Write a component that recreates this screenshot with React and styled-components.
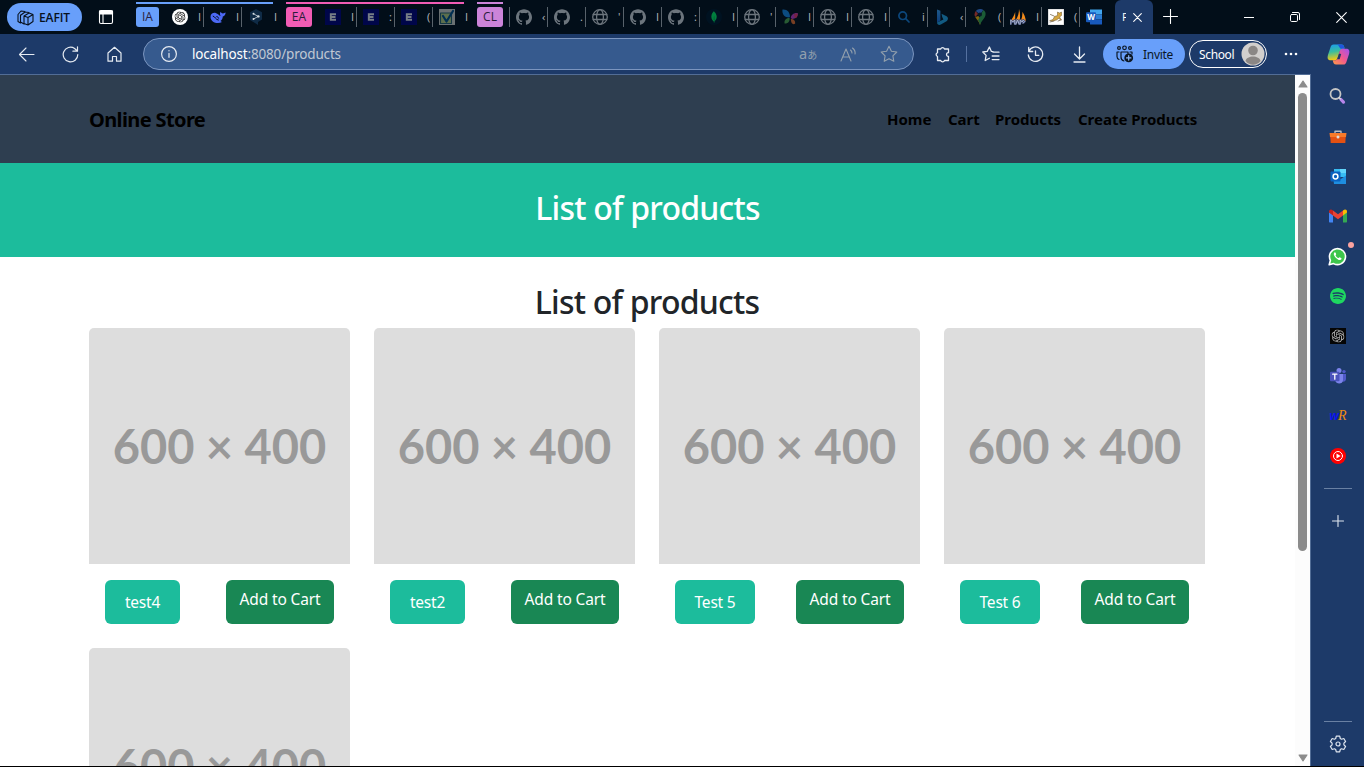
import React from "react";
import styled, { createGlobalStyle } from "styled-components";
import { SiGithub, SiOpenai, SiSpotify, SiMongodb } from "react-icons/si";

const ui = `"Noto Sans", "Open Sans", sans-serif`;

const GlobalStyle = createGlobalStyle`
  * { box-sizing: border-box; }
  html, body { margin: 0; padding: 0; }
  body { font-family: ${ui}; background: #1d3a69; overflow: hidden; }
  svg { display: block; flex: none; }
`;

const Window = styled.div`
  width: 1364px;
  height: 767px;
  display: flex;
  flex-direction: column;
  background: #1d3a69;
  border-bottom: 1px solid #000;
  overflow: hidden;
`;

/* ---------- tab strip ---------- */
const TabStrip = styled.div`
  height: 34px;
  flex: none;
  display: flex;
  background: #020e19;
  color: #fff;
`;
const Profile = styled.div`
  width: 75px;
  height: 28px;
  margin: 3px 0 0 7px;
  border-radius: 14px;
  background: #689ffa;
  color: #07111d;
  display: flex;
  align-items: center;
  padding-left: 10px;
  gap: 5px;
  font-family: "Open Sans", sans-serif;
  font-size: 12px;
  letter-spacing: -0.1px;
  font-weight: 600;
`;
const Workspace = styled.div`
  width: 54px;
  padding: 9px 0 0 16px;
`;
const Group = styled.div`
  width: ${(p) => p.$w}px;
  margin-right: ${(p) => p.$after}px;
  margin-top: 2px;
  height: 32px;
  border-top: 2px solid ${(p) => p.$c};
  display: flex;
  padding-top: 3px;
`;
const GroupChip = styled.div`
  width: ${(p) => p.$w}px;
  height: 20px;
  margin-right: 6px;
  flex: none;
  border-radius: 3px;
  background: ${(p) => p.$c};
  color: #2b1d3b;
  font-family: "Open Sans", sans-serif;
  font-size: 12px;
  line-height: 20px;
  text-align: center;
`;
const Tab = styled.div`
  width: 38px;
  flex: none;
  height: 20px;
  margin-top: ${(p) => p.$top || 0}px;
  border-left: 1px solid ${(p) => (p.$first ? "transparent" : "#58626b")};
  display: flex;
  align-items: center;
  padding-left: 6px;
`;
const Favicon = styled.div`
  width: 16px;
  height: 16px;
  flex: none;
  opacity: ${(p) => (p.$dim ? 0.5 : 1)};
`;
const Peek = styled.span`
  margin-left: 10px;
  white-space: nowrap;
  font-family: "Open Sans", sans-serif;
  font-size: 11px;
  line-height: 18px;
  color: #b4b8bc;
`;
const ActiveTab = styled.div`
  width: 38px;
  height: 34px;
  flex: none;
  margin-left: -2px;
  background: #1d3a69;
  border-radius: 6px 6px 0 0;
  display: flex;
  align-items: center;
  padding: 0 0 0 7px;
`;
const ActivePeek = styled(Peek)`
  width: 4px;
  overflow: hidden;
  margin: 0 7px 0 0;
  color: #fff;
`;
const WindowButtons = styled.div`
  display: flex;
  align-items: center;
  margin-left: auto;
  padding-right: 17px;
  gap: 36px;
`;
const NewTab = styled.div`
  padding: 9px 0 0 10px;
`;

/* ---------- toolbar ---------- */
const Toolbar = styled.div`
  height: 40px;
  flex: none;
  display: flex;
  align-items: center;
  color: #e6ebf2;
  padding-left: 18px;
`;
const Slot = styled.div`
  width: ${(p) => p.$w}px;
  flex: none;
  display: flex;
  align-items: center;
`;
const Address = styled.div`
  width: 771px;
  height: 32px;
  flex: none;
  border: 1px solid #7b95bf;
  border-radius: 16px;
  background: #365a8e;
  display: flex;
  align-items: center;
  padding: 0 15px 0 17px;
`;
const Url = styled.span`
  margin-left: 15px;
  font-size: 13.5px;
  line-height: 20px;
  white-space: nowrap;
  color: #c0c8d3;
  letter-spacing: -0.17px;
  b { font-weight: 400; color: #fff; }
`;
const AddressTools = styled.div`
  margin-left: auto;
  display: flex;
  align-items: center;
  gap: 23px;
  color: #93a0ad;
`;
const Translate = styled.span`
  font-size: 14.5px;
  line-height: 18px;
  width: 18px;
  white-space: nowrap;
  small { font-family: "Noto Sans CJK JP", sans-serif; font-size: 10px; }
`;
const ToolbarIcon = styled.div`
  width: ${(p) => p.$w}px;
  flex: none;
  display: flex;
  justify-content: center;
  padding-left: ${(p) => p.$shift || 0}px;
`;
const Divider = styled.div`
  width: 1px;
  height: 16px;
  background: #5571a0;
  flex: none;
`;
const Invite = styled.div`
  width: 82px;
  height: 30px;
  flex: none;
  margin-left: 2px;
  border-radius: 15px;
  background: #689ffa;
  color: #0b1726;
  display: flex;
  align-items: center;
  padding-left: 13px;
  gap: 9px;
  font-size: 12px;
  letter-spacing: -0.3px;
`;
const School = styled.div`
  width: 78px;
  height: 28px;
  flex: none;
  margin-left: 4px;
  border: 1px solid #fff;
  border-radius: 14px;
  color: #fff;
  display: flex;
  align-items: center;
  justify-content: space-between;
  padding: 0 1px 0 9px;
  font-size: 12px;
  letter-spacing: -0.35px;
`;

/* ---------- page ---------- */
const Body = styled.div`
  flex: 1;
  min-height: 0;
  display: flex;
`;
const Viewport = styled.div`
  width: 1311px;
  display: flex;
  border-top: 1px solid #526d96;
  border-right: 1px solid #526d96;
`;
const Page = styled.div`
  width: 1295px;
  flex: none;
  background: #fff;
  overflow: hidden;
`;
const SiteHeader = styled.header`
  height: 88px;
  background: #2e3e50;
  display: flex;
  align-items: center;
  justify-content: space-between;
  padding: 0 98px 0 89px;
  color: #000;
`;
const Brand = styled.div`
  padding-top: 2px;
  font-size: 20px;
  line-height: 30px;
  font-weight: 700;
  letter-spacing: -0.62px;
  white-space: nowrap;
`;
const Nav = styled.nav`
  display: flex;
  gap: 16px;
`;
const NavLink = styled.a`
  width: ${(p) => p.$w}px;
  font-size: 15px;
  line-height: 24px;
  font-weight: 700;
  letter-spacing: -0.02px;
  white-space: nowrap;
`;
const Title = styled.h2`
  margin: 0;
  font-size: 32px;
  line-height: 38px;
  font-weight: 500;
  text-align: center;
  letter-spacing: -0.78px;
  color: ${(p) => p.$c};
`;
const Masthead = styled.div`
  height: 94px;
  background: #1cbc9c;
  padding-top: 26px;
`;
const Content = styled.main`
  padding: 26px 90px 0 89px;
`;
const Grid = styled.div`
  display: grid;
  grid-template-columns: repeat(4, 261px);
  gap: 24px;
  margin-top: 7px;
`;
const Card = styled.article`
  height: 296px;
`;
const Placeholder = styled.div`
  height: 236px;
  background: #ddd;
  border-radius: 5px 5px 0 0;
  color: #999;
  font-family: Lato, sans-serif;
  font-weight: 700;
  font-size: 47px;
  line-height: 236px;
  text-align: center;
  white-space: nowrap;
`;
const Actions = styled.div`
  display: flex;
  justify-content: space-between;
  padding: 16px 16px 0;
`;
const Button = styled.button`
  width: ${(p) => p.$w}px;
  height: 44px;
  border: 0;
  border-radius: 6px;
  padding: ${(p) => p.$pad};
  background: ${(p) => p.$c};
  color: #fff;
  font: 400 15.5px/24px ${ui};
  letter-spacing: ${(p) => p.$ls}px;
  white-space: nowrap;
`;
const Scrollbar = styled.div`
  width: 15px;
  background: #fcfcfc;
  display: flex;
  flex-direction: column;
  align-items: center;
  padding: 5px 0 4px;
`;
const Thumb = styled.div`
  width: 9px;
  height: 458px;
  margin: 5px 0 auto;
  border-radius: 5px;
  background: #8b8b8b;
`;

/* ---------- sidebar ---------- */
const Sidebar = styled.aside`
  width: 53px;
  display: flex;
  flex-direction: column;
  align-items: center;
  padding-top: 2px;
  color: #dfe6f0;
`;
const SideItem = styled.div`
  height: 40px;
  width: 53px;
  display: flex;
  align-items: center;
  justify-content: center;
  position: relative;
  flex: none;
`;
const AddApp = styled(SideItem)`
  margin-top: 12px;
`;
const Settings = styled(SideItem)`
  height: 44px;
`;
const Dot = styled.i`
  position: absolute;
  width: 6px;
  height: 6px;
  border-radius: 50%;
  background: #fba3a0;
  right: 10px;
  top: 6px;
`;
const Rule = styled.div`
  width: 28px;
  height: 1px;
  flex: none;
  background: #6980a3;
  margin-top: ${(p) => p.$top};
`;
const WordRef = styled.span`
  color: #0a12ef;
  font: italic 700 12px/16px "Liberation Sans", sans-serif;
  letter-spacing: -1px;
  b { color: #f08a13; font: italic 400 14px/16px "Liberation Serif", serif; }
`;

const Svg = ({ s = 16, w = 1.1, box = 16, children, h }) => (
  <svg width={s} height={h || s} viewBox={`0 0 ${box} ${h ? (box * h) / s : box}`} fill="none" stroke="currentColor" strokeWidth={w} strokeLinecap="round" strokeLinejoin="round">
    {children}
  </svg>
);

const Globe = () => (
  <Svg w={1.3}>
    <g stroke="#d6dbe0">
      <circle cx="8" cy="8" r="7.3" />
      <ellipse cx="8" cy="8" rx="3.4" ry="7.3" />
      <path d="M1.3 5.5h13.4M1.3 10.5h13.4" />
    </g>
  </Svg>
);
const GitHub = () => <SiGithub size={16} color="#d6dbe0" />;
const Eafit = () => (
  <Svg>
    <rect x="0" y="0" width="16" height="16" fill="#00007c" stroke="none" />
    <path d="M11 5.200H5.800v5.600H11M5.800 8h4.700" stroke="#e9ecf2" strokeWidth="1.900" strokeLinecap="butt" strokeLinejoin="miter" />
  </Svg>
);
const ChatGpt = () => (
  <Svg>
    <circle cx="8" cy="8" r="8" fill="#fff" stroke="none" />
    <g transform="translate(2.5 2.5)"><SiOpenai size={11} color="#111" stroke="none" /></g>
  </Svg>
);
const Whale = () => (
  <Svg>
    <path d="M0.5 8C0.5 4.8 3 3.4 5.7 3.9 8 4.5 9 6.4 10.6 7c-.9-1.6-.8-3 .1-4.2.5 1.3 1.3 1.6 2.2 1.6 1 0 1.8-.6 2.7-.8-.1 2-.9 3.5-2.8 3.9-.1 2-1 3.5-2.4 4.6l1.6 1c-4.6 2.5-11.5 0-11.5-5.1z" fill="#4c69f5" stroke="none" />
    <path d="M3.2 7.1c1.8.2 2.2 3.5 5.1 4M6.8 7.6c1 .1 1.7.8 1.8 1.6" stroke="#020e19" strokeWidth="1" />
  </Svg>
);
const DarkHex = () => (
  <Svg>
    <path d="M8 0l6 3.3v7.2L10 13v3l-3-2-5-3V3.3z" fill="#0f2b46" stroke="none" />
    <path d="M5.500 4.800l4.700 2.600-4.700 2.700" stroke="#b9c4ce" strokeWidth=".9" />
    <g fill="#d5dde4" stroke="none"><circle cx="5.500" cy="4.800" r="1" /><circle cx="10.400" cy="7.400" r="1.200" /><circle cx="5.500" cy="10.100" r="1" /></g>
  </Svg>
);
const Check = () => (
  <Svg>
    <rect width="16" height="16" fill="#d4d4cc" stroke="none" />
    <rect x="1.500" y="4" width="11" height="10.500" fill="#b5cf82" stroke="#276171" />
    <path d="M4 7l3.500 5.500L14 2" stroke="#00508c" strokeWidth="2.200" />
  </Svg>
);
const Mongo = () => (
  <Svg>
    <circle cx="8" cy="8" r="8" fill="#00172a" stroke="none" />
    <g transform="translate(2 2)"><SiMongodb size={12} color="#00ed64" stroke="none" /></g>
  </Svg>
);
const Butterfly = () => (
  <Svg>
    <g stroke="none">
      <path d="M.5.500C5 0 8 2.800 8 8.300 4 9 .3 6.500.4 1.800z" fill="#1689e6" />
      <path d="M8.800 9C8.800 6 12 3.600 15.800 4.200c.6 3-2 5.700-5.600 5.700z" fill="#c63acb" />
      <path d="M7.600 9C8 12.500 5.800 14.800 2.600 14.500 1.800 11.400 4 8.800 7.600 9z" fill="#4fa84e" />
      <path d="M8.800 10c3-.2 4.500 1.500 4.400 4.500-2 1.500-4.200.5-4.400-4.500z" fill="#ed702e" />
      <path d="M12 5l3.800-.6-.8 3.900-2.100 1z" fill="#ea3869" />
    </g>
  </Svg>
);
const BlueSearch = () => (
  <Svg w={1.7}><g stroke="#1680df"><circle cx="6.700" cy="6.700" r="3.800" /><path d="M9.700 9.700l3.300 3.300" /></g></Svg>
);
const Bing = () => (
  <Svg>
    <defs><linearGradient id="bing" x1="0" y1="0" x2="0" y2="1"><stop stopColor="#3ba4fa" /><stop offset="1" stopColor="#186ee0" /></linearGradient></defs>
    <path d="M3 .5l3.4 1.2v9.7L3 13.8z" fill="url(#bing)" stroke="none" />
    <path d="M7.500 4.800l4.600 2.100c3 1.500 1.800 4.300.4 5.300l-5.600 3.300c-1.800 1-3.900-.1-3.900-2l6.400-3.100-1.200-2.300z" fill="#22a5e8" stroke="none" />
  </Svg>
);
const MapsPin = () => (
  <Svg>
    <g stroke="none">
      <path d="M8 0a5.400 5.400 0 0 0-4.200 2L8 5.600 11.300.9A5.400 5.400 0 0 0 8 0z" fill="#4285f4" />
      <path d="M3.800 2a5.600 5.600 0 0 0-.6 6L6 5z" fill="#ea4335" />
      <path d="M3.200 8C4.500 10.500 7 12 8 16l1.500-5.200L6.300 7z" fill="#fbbc04" />
      <path d="M11.300.9C14 2.200 14.200 6 12.600 8.400 11 11 9 12.500 8 16c-.3-2-1-3.500-2-4.800z" fill="#34a853" />
      <circle cx="8" cy="5.500" r="2" fill="#0b1e31" />
    </g>
  </Svg>
);
const Sails = () => (
  <Svg>
    <path d="M5.200 3v9H.6C2.400 9.400 4 6.800 5.200 3zM9 0c1.300 3.800 1.200 7.700.8 11.500H5.500C7.800 8 9 4.500 9 0zM12.400 2.700c2 2.800 3 5.800 3.500 9h-5c1.200-3 1.700-6 1.500-9z" fill="#f38b1b" stroke="none" />
    <path d="M.8 15v-4l2 2 2-2v4m1 0l1.700-4L9.200 15m1 0v-4l2 2 1-2 1.500 1.500-1.500 1.500" stroke="#46527e" strokeWidth="2" />
    <path d="M.8 15v-4l2 2 2-2v4m1 0l1.700-4L9.200 15m1 0v-4l2 2 1-2 1.500 1.500-1.500 1.500" stroke="#b2bdd4" strokeWidth=".9" />
  </Svg>
);
const Tomcat = () => (
  <Svg>
    <rect width="16" height="16" fill="#fff" stroke="#c9c9c9" />
    <path d="M2 11.500l3-1 1.500-3 3-1L9.500 3l2 1 2-1v3.500l-2 1.500 2 3-3-1.500-2 1.500-4 1z" fill="#d3a642" stroke="#6d5328" strokeWidth=".5" />
    <path d="M2 13l4-1m4 0l3-1M2.500 5.500l3.500 1.500" stroke="#665438" strokeWidth=".7" />
  </Svg>
);
const OfficeTile = ({ letter, c, light, mid }) => (
  <Svg>
    <g stroke="none">
      <rect x="4" y="0.5" width="12" height="5" fill={light} />
      <rect x="4" y="5.5" width="12" height="5" fill={mid} />
      <rect x="4" y="10.5" width="12" height="5" rx=".6" fill={c} />
      <rect x="0" y="3.2" width="10" height="10" rx="1" fill={c} />
      <text x="5" y="11" fill="#fff" fontSize="8" fontWeight="700" textAnchor="middle" fontFamily="Open Sans">{letter}</text>
    </g>
  </Svg>
);
const Star = ({ list }) => (
  <Svg s={18} box={18} w={list ? 1.3 : 1.1}>
    <path d={list ? "M11 6.6L9.4 6.4 7.4 2 5.2 6.4.8 7l3.300 3.400-.9 5.100 4.200-2.300M11 7.200h6M10.200 11h6.800M10.200 14.600h6.800" : "M9 1.2l2.4 5 5.4.8-3.9 3.800.9 5.500L9 13.700l-4.800 2.600.9-5.500L1.200 7l5.400-.8z"} />
  </Svg>
);
const Puzzle = () => (
  <Svg s={17} box={17} w={1.3}>
    <path d="M3.500 3h3.200a2 2 0 0 1 3.800 0h4v3.700c-2.600-.5-2.600 4.100 0 3.600V14.500h-4a2 2 0 0 1-3.800 0H3.500v-4a2 2 0 0 1 0-3.800z" />
  </Svg>
);
const History = () => (
  <Svg s={17} box={17} w={1.3}>
    <path d="M1.700 1.500v4h4M1.900 5.200A7.200 7.200 0 1 1 1.300 9M8.500 4.800v4.500h3.300" />
  </Svg>
);
const Download = () => (
  <Svg s={17} box={17} w={1.3}>
    <path d="M8.500 1v11.500M3.500 8l5 5 5-5M3 16h11" />
  </Svg>
);
const Dots = () => (
  <Svg s={14} h={4} box={14}>
    <g fill="#fff" stroke="none"><circle cx="2" cy="2" r="1.300" /><circle cx="7" cy="2" r="1.300" /><circle cx="12" cy="2" r="1.300" /></g>
  </Svg>
);
const Copilot = () => (
  <Svg s={23} box={24}>
    <defs>
      <linearGradient id="cpA" x1="0" y1="0" x2=".2" y2="1"><stop stopColor="#1a9af2" /><stop offset=".5" stopColor="#37bda0" /><stop offset="1" stopColor="#f3c914" /></linearGradient>
      <linearGradient id="cpB" x1="1" y1="0" x2="0" y2="1"><stop stopColor="#a150f3" /><stop offset=".5" stopColor="#f2588f" /><stop offset="1" stopColor="#ff9c45" /></linearGradient>
    </defs>
    <g stroke="none">
      <path d="M7 1.500h8c2.300 0 2.800 1.500 3.400 4L16 7c-2 0-2.500 1-3 2.800l-1.600 5C10.700 17 10 18 7.600 18H4C1 18 0 16 1 12.500L3.500 5C4.200 2.600 5 1.500 7 1.500z" fill="url(#cpA)" />
      <path d="M10 1.500h5c2.300 0 2.800 1.500 3.400 4.500H15c-2 0-2.500-4.500-5-4.500z" fill="#1f55dd" />
      <path d="M17 22.500H9.500c-2.300 0-2.800-1.500-3.500-4.500h2c2 0 2.700-1 3.300-3l1.700-5.500C13.700 7 14.500 6 16.500 6H20c3 0 4 2 3 5.500L20.500 19c-.7 2.400-1.500 3.500-3.500 3.500z" fill="url(#cpB)" />
      <path d="M12.500 11l-2 6h2.700l1.600-5.500z" fill="#1d3a69" />
    </g>
  </Svg>
);
const SearchTool = () => (
  <Svg s={17} box={17}><circle cx="6.500" cy="6" r="5" stroke="#c5c5c5" strokeWidth="1.800" /><path d="M12 11.500l2.500 2.600" stroke="#b786ea" strokeWidth="3.200" /><path d="M10.200 9.700l1 1" stroke="#d9d9d9" strokeWidth="1.600" /></Svg>
);
const Toolbox = () => (
  <Svg s={18} box={18}><path d="M6 6V4.200h6V6" stroke="#b9bcc0" strokeWidth="1.400" /><path d="M1 6h16l-.7 10H1.700z" fill="#e35113" stroke="none" /><path d="M.5 6h17l-.5 4H1z" fill="#f77a2a" stroke="none" /><circle cx="9" cy="10" r="1.500" fill="#dedede" stroke="none" /></Svg>
);
const Outlook = () => (
  <Svg><g stroke="none"><path d="M4 1h12v8H4z" fill="#38bcf2" /><path d="M10 1h6v4h-6z" fill="#62d5fb" /><path d="M3 8.500l7 3 6-4V16H4z" fill="#1e8ee0" /><rect x=".5" y="3.500" width="10" height="10" rx="1" fill="#0a62c0" /></g><circle cx="5.500" cy="8.500" r="2.400" stroke="#fff" strokeWidth="1.500" /></Svg>
);
const Gmail = () => (
  <Svg s={18} box={18}><g stroke="none"><path d="M0 5l4 3v7.500H1c-.6 0-1-.4-1-1z" fill="#4285f4" /><path d="M14 8l4-3v9.500c0 .6-.4 1-1 1h-3z" fill="#34a853" /><path d="M4 3.500l5 3.800 5-3.800v5L9 12.300 4 8.500z" fill="#ea4335" /><path d="M0 4.500C0 2.500 2 1.800 4 3.500v5L0 5.600z" fill="#c5221f" /><path d="M18 4.500c0-2-2-2.700-4-1v5l4-2.900z" fill="#fbbc04" /></g></Svg>
);
const WhatsApp = () => (
  <Svg s={19} box={19}><path d="M1.200 17.800l1.200-4.500a8 8 0 1 1 3.200 3.300z" fill="#3dc54b" stroke="#fff" strokeWidth="1.600" /><path d="M6.700 5.300c-1 .6-1.200 1.900-.5 3.300 1 2 2.500 3.500 4.500 4.300 1.400.5 2.700 0 2.900-1.300.1-.6-1.800-1.500-2.200-1.400-.4.100-.7 1-1.100.9-1-.3-2.400-1.700-2.700-2.600-.1-.4.700-.8.600-1.200-.1-.5-.7-2.200-1.500-2z" fill="#fff" stroke="none" /></Svg>
);
const GptTile = () => (
  <Svg><rect width="16" height="16" fill="#050505" stroke="none" /><g transform="translate(1.500 1.500)"><SiOpenai size={13} color="#b5b5b5" stroke="none" /></g></Svg>
);
const Teams = () => (
  <Svg><g stroke="none"><circle cx="9" cy="2.600" r="2.500" fill="#7b83eb" /><circle cx="14" cy="3.600" r="1.700" fill="#5059c9" /><path d="M11 6h5v5c0 2-2 3-4 2.500z" fill="#5059c9" /><path d="M5 6h8v6c0 4.500-7 5-8 0z" fill="#7b83eb" /><rect y="3.700" width="9.500" height="9.500" rx="1" fill="#4b53bc" /></g><path d="M2.700 6.200h4.200M4.800 6.200v5" stroke="#fff" strokeWidth="1.300" /></Svg>
);
const YtMusic = () => (
  <Svg><circle cx="8" cy="8" r="8" fill="#f00" stroke="none" /><circle cx="8" cy="8" r="4.500" stroke="#fff" strokeWidth="1" /><path d="M6.500 5.500L10.700 8l-4.200 2.500z" fill="#fff" stroke="none" /></Svg>
);
const Gear = () => (
  <Svg s={18} box={18} w={1.200}><path d="M7.300 1.200h3.400l.6 2.300 1.200.7 2.300-.7 1.800 3-1.700 1.700v1.600l1.700 1.700-1.800 3-2.300-.7-1.200.7-.6 2.300H7.300l-.6-2.300-1.200-.7-2.300.7-1.800-3 1.700-1.700V8.200L1.400 6.500l1.800-3 2.300.7 1.200-.7z" /><circle cx="9" cy="9" r="2" /></Svg>
);
const Avatar = () => (
  <Svg s={24} box={24}><circle cx="12" cy="12" r="11.500" fill="#d2cfcd" stroke="none" /><circle cx="12" cy="8.500" r="4.800" fill="#8b8785" stroke="none" /><path d="M4.500 19c1-6 14-6 15 0-4 5-11 5-15 0z" fill="#8b8785" stroke="none" /></Svg>
);
const People = () => (
  <Svg s={18} box={18} w={1.200}>
    <circle cx="3" cy="3" r="1.400" /><circle cx="8.500" cy="2.800" r="1.800" /><circle cx="14" cy="3" r="1.400" />
    <path d="M3 14.500C1.500 14 1 13 1 11.500V7h2M8 16c-2-.4-3-2-3-4V7h7v1.500M14 7h2v2" />
    <circle cx="12.700" cy="12.900" r="4.400" fill="#0b1726" stroke="none" /><path d="M12.700 10.700v4.400M10.500 12.900h4.400" stroke="#8bb5fb" />
  </Svg>
);

const tabs = {
  ia: [[ChatGpt, "I", 0], [Whale, "I", 0], [DarkHex, "I", 0]],
  ea: [[Eafit, "I", 1], [Eafit, ":", 1], [Eafit, "(", 1], [Check, "I", 1]],
  rest: [[GitHub, "‹", 1], [GitHub, ".", 1], [Globe, "'", 1], [GitHub, "I", 1], [GitHub, ":", 1], [Mongo, "I", 1], [Globe, "'", 1], [Butterfly, "I", 1], [Globe, "I", 1], [Globe, "I", 1], [BlueSearch, "i", 1], [Bing, "‹", 1], [MapsPin, "(", 1], [Sails, "I", 0], [Tomcat, "(", 0]],
};
const TabList = ({ list, top, first }) =>
  list.map(([Icon, t, dim], i) => (
    <Tab key={i} $top={top} $first={first && i === 0}>
      <Favicon $dim={dim}><Icon /></Favicon>
      <Peek>{t}</Peek>
    </Tab>
  ));

const products = [["test4", 75], ["test2", 75], ["Test 5", 80], ["Test 6", 80], ["test7", 75]];
const apps = [SearchTool, Toolbox, Outlook, Gmail, WhatsApp, () => <SiSpotify size={16} color="#1ed760" />, GptTile, Teams, () => <WordRef>w<b>R</b></WordRef>, YtMusic];

export default function App() {
  return (
    <Window>
      <GlobalStyle />
      <TabStrip>
        <Profile>
          <Svg s={17} box={17}><path d="M1 5.500v7l2.500 1.500M1 5.500L4 2l4 .5M4 6l4-3 4 .5M3.500 6v7L7 15M7 7l5-3 4 1.500v7L11 16l-4-1.500zM7 7l4 1.500L16 5.500M11 8.500V16" /></Svg>
          EAFIT
        </Profile>
        <Workspace>
          <Svg><rect x="1.500" y="1.500" width="13" height="13" rx="1.500" stroke="#fff" /><path d="M1.500 2h13v3h-13z" stroke="#fff" fill="#fff" /><path d="M5 5v9" stroke="#fff" /></Svg>
        </Workspace>
        <Group $w={137} $after={13} $c="#689ffa">
          <GroupChip $w={23} $c="#689ffa">IA</GroupChip>
          <TabList list={tabs.ia} first />
        </Group>
        <Group $w={178} $after={13} $c="#f15cb5">
          <GroupChip $w={26} $c="#f15cb5">EA</GroupChip>
          <TabList list={tabs.ea} first />
        </Group>
        <Group $w={26} $after={6} $c="#cc84d9">
          <GroupChip $w={26} $c="#cc84d9">CL</GroupChip>
        </Group>
        <TabList list={tabs.rest} top={7} />
        <Tab $top={7}><Favicon><OfficeTile letter="W" c="#185abd" light="#41a5ee" mid="#2b7cd3" /></Favicon></Tab>
        <ActiveTab>
          <ActivePeek>P</ActivePeek>
          <Svg s={9} box={9}><path d="M.7.7l7.600 7.600M8.300.7L.7 8.300" stroke="#fff" /></Svg>
        </ActiveTab>
        <NewTab><Svg s={15} box={15}><path d="M7.500.5v14M.5 7.500h14" stroke="#fff" /></Svg></NewTab>
        <WindowButtons>
          <Svg s={10} box={10}><path d="M0 5.500h10" stroke="#fff" /></Svg>
          <Svg s={10} box={10} w={1}><rect x=".5" y="2.500" width="7" height="7" rx="1.200" /><path d="M2.500.5H8A1.500 1.500 0 0 1 9.500 2v5.500" /></Svg>
          <Svg s={11} box={11}><path d="M.7.7l9.600 9.600M10.300.7L.7 10.300" stroke="#fff" /></Svg>
        </WindowButtons>
      </TabStrip>

      <Toolbar>
        <Slot $w={44}><Svg s={17} box={17}><path d="M16 8.500H1.500M8 2L1.500 8.500 8 15" /></Svg></Slot>
        <Slot $w={44}><Svg s={17} box={17} w={1.200}><path d="M15.800 8.500A7.300 7.300 0 1 1 12.600 2.500l2.400 2.200M15.500.8v4.400h-4.600" /></Svg></Slot>
        <Slot $w={37}><Svg s={17} box={17} w={1.200}><path d="M2 7l6.500-5.700L15 7v8.200h-4.500V10.500h-4v4.700H2z" /></Svg></Slot>
        <Address>
          <Svg w={1.200}><circle cx="8" cy="8" r="7.400" /><path d="M8 7.300v4M8 4.600v.2" /></Svg>
          <Url><b>localhost</b>:8080/products</Url>
          <AddressTools>
            <Translate>a<small>あ</small></Translate>
            <Svg s={17} box={17}><path d="M1 15L6 3l5 12M2.800 11h6.500M10.500 4c1 .8 1.500 1.600 1.500 3M12.500 2c2 1.500 2.900 3.500 2.600 6" /></Svg>
            <Star />
          </AddressTools>
        </Address>
        <ToolbarIcon $w={52} $shift={4}><Puzzle /></ToolbarIcon>
        <Divider />
        <ToolbarIcon $w={46} $shift={2}><Star list /></ToolbarIcon>
        <ToolbarIcon $w={44}><History /></ToolbarIcon>
        <ToolbarIcon $w={44}><Download /></ToolbarIcon>
        <Invite><People />Invite</Invite>
        <School>School<Avatar /></School>
        <ToolbarIcon $w={48}><Dots /></ToolbarIcon>
        <ToolbarIcon $w={46}><Copilot /></ToolbarIcon>
      </Toolbar>
      <Body>
        <Viewport>
          <Page>
            <SiteHeader>
              <Brand>Online Store</Brand>
              <Nav>
                <NavLink $w={45}>Home</NavLink>
                <NavLink $w={31}>Cart</NavLink>
                <NavLink $w={67}>Products</NavLink>
                <NavLink $w={119}>Create Products</NavLink>
              </Nav>
            </SiteHeader>
            <Masthead><Title $c="#fff">List of products</Title></Masthead>
            <Content>
              <Title $c="#212529">List of products</Title>
              <Grid>
                {products.map(([name, w]) => (
                  <Card key={name}>
                    <Placeholder>600 × 400</Placeholder>
                    <Actions>
                      <Button $w={w} $c="#1cbc9c" $pad="0" $ls={-0.2}>{name}</Button>
                      <Button $w={108} $c="#198754" $pad="0 0 6px" $ls={-0.15}>Add to Cart</Button>
                    </Actions>
                  </Card>
                ))}
              </Grid>
            </Content>
          </Page>
          <Scrollbar>
            <Svg s={10} h={8} box={10}><path d="M5 1L9 7H1z" fill="#8b8b8b" stroke="#8b8b8b" /></Svg>
            <Thumb />
            <Svg s={10} h={8} box={10}><path d="M5 7L9 1H1z" fill="#8b8b8b" stroke="#8b8b8b" /></Svg>
          </Scrollbar>
        </Viewport>
        <Sidebar>
          {apps.map((Icon, i) => (
            <SideItem key={i}><Icon />{i === 4 && <Dot />}</SideItem>
          ))}
          <Rule $top="12px" />
          <AddApp><Svg s={12} box={12}><path d="M6 .5v11M.5 6h11" /></Svg></AddApp>
          <Rule $top="auto" />
          <Settings><Gear /></Settings>
        </Sidebar>
      </Body>
    </Window>
  );
}
